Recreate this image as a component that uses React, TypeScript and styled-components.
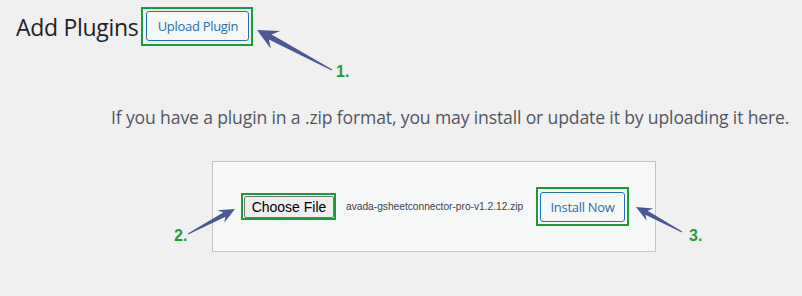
import React from "react";
import styled, { createGlobalStyle } from "styled-components";

const GlobalStyle = createGlobalStyle`
  html, body { margin: 0; padding: 0; background: #f0f0f1; }
  body { width: 802px; height: 296px; overflow: hidden; }
`;

const Page = styled.div`
  position: relative;
  width: 802px;
  height: 296px;
  box-sizing: border-box;
  padding-top: 7px;
  font-family: "Open Sans", "Noto Sans", sans-serif;
`;

const HeaderRow = styled.div`
  display: flex;
  align-items: center;
  padding-left: 16px;
  gap: 3px;
`;

const Title = styled.h1`
  margin: 0;
  font-size: 23px;
  font-weight: 400;
  line-height: 30px;
  color: #1d2327;
  letter-spacing: -0.3px;
`;

const Highlight = styled.div<{ $pad: string }>`
  display: inline-flex;
  border: 2px solid #1e9a3d;
  padding: ${(p) => p.$pad};
`;

const WpButton = styled.button<{ $w: number }>`
  box-sizing: border-box;
  width: ${(p) => p.$w}px;
  height: 30px;
  padding: 0;
  background: #f6f7f7;
  border: 1px solid #2271b1;
  border-radius: 3px;
  color: #2271b1;
  font-family: "Open Sans", "Noto Sans", sans-serif;
  font-size: 13px;
  letter-spacing: -0.3px;
  cursor: pointer;
`;

const Help = styled.p`
  margin: 59px 0 0;
  padding-left: 111px;
  font-size: 17.6px;
  line-height: 24px;
  color: #50575e;
  white-space: nowrap;
  letter-spacing: -0.15px;
`;

const UploadBox = styled.div`
  box-sizing: border-box;
  margin: 32px 0 0 212px;
  width: 444px;
  height: 91px;
  background: #f6f7f7;
  border: 1px solid #c3c4c7;
  display: flex;
  align-items: center;
  padding-left: 28px;
`;

const FileButton = styled.button`
  box-sizing: border-box;
  width: 90px;
  height: 22px;
  padding: 0;
  background: #efefef;
  border: 1px solid #767676;
  border-radius: 2px;
  color: #000;
  font-family: "Liberation Sans", Arial, sans-serif;
  font-size: 14px;
  line-height: 20px;
`;

const FileName = styled.span`
  margin-left: 10px;
  font-family: "Liberation Sans", Arial, sans-serif;
  font-size: 10.2px;
  color: #3c434a;
  white-space: nowrap;
`;

const InstallWrap = styled.div`
  margin-left: auto;
  margin-right: 26px;
  display: flex;
`;

const Overlay = styled.svg`
  position: absolute;
  left: 0;
  top: 0;
  pointer-events: none;
`;

const StepLabel = styled.span<{ $x: number; $y: number }>`
  position: absolute;
  left: ${(p) => p.$x}px;
  top: ${(p) => p.$y}px;
  font-family: "Liberation Sans", Arial, sans-serif;
  font-weight: 700;
  font-size: 16px;
  line-height: 16px;
  color: #1e9a3d;
`;

type Pt = [number, number];

function arrowPoints(
  tip: Pt,
  tail: Pt,
  headLen: number,
  headHalf: number,
  notch: number,
  neckHalf: number,
  tailHalf: number
): string {
  const dx = tip[0] - tail[0];
  const dy = tip[1] - tail[1];
  const len = Math.hypot(dx, dy);
  const ux = dx / len;
  const uy = dy / len;
  const nx = -uy;
  const ny = ux;
  const base: Pt = [tip[0] - ux * headLen, tip[1] - uy * headLen];
  const neck: Pt = [tip[0] - ux * (headLen - notch), tip[1] - uy * (headLen - notch)];
  const pts: Pt[] = [
    tip,
    [base[0] + nx * headHalf, base[1] + ny * headHalf],
    [neck[0] + nx * neckHalf, neck[1] + ny * neckHalf],
    [tail[0] + nx * tailHalf, tail[1] + ny * tailHalf],
    [tail[0] - nx * tailHalf, tail[1] - ny * tailHalf],
    [neck[0] - nx * neckHalf, neck[1] - ny * neckHalf],
    [base[0] - nx * headHalf, base[1] - ny * headHalf],
  ];
  return pts.map((p) => `${p[0].toFixed(1)},${p[1].toFixed(1)}`).join(" ");
}

const arrows = [
  arrowPoints([257, 30], [332, 70], 21, 10, 6, 2.8, 0.6),
  arrowPoints([235, 209], [188, 234], 16, 7, 4, 2.3, 0.5),
  arrowPoints([636, 207], [682, 232], 16, 7, 4, 2.3, 0.5),
];

export default function App() {
  return (
    <>
      <GlobalStyle />
      <Page>
        <HeaderRow>
          <Title>Add Plugins</Title>
          <Highlight $pad="2px 2px 3px 3px">
            <WpButton $w={103}>Upload Plugin</WpButton>
          </Highlight>
        </HeaderRow>
        <Help>
          If you have a plugin in a .zip format, you may install or update it by uploading it here.
        </Help>
        <UploadBox>
          <Highlight $pad="1px 0 0 1px">
            <FileButton>Choose File</FileButton>
          </Highlight>
          <FileName>avada-gsheetconnector-pro-v1.2.12.zip</FileName>
          <InstallWrap>
            <Highlight $pad="3px 2px 2px 2px">
              <WpButton $w={85}>Install Now</WpButton>
            </Highlight>
          </InstallWrap>
        </UploadBox>
        <Overlay width={802} height={296} viewBox="0 0 802 296">
          {arrows.map((p, i) => (
            <polygon key={i} points={p} fill="#4b5894" />
          ))}
        </Overlay>
        <StepLabel $x={336} $y={64}>1.</StepLabel>
        <StepLabel $x={174} $y={228}>2.</StepLabel>
        <StepLabel $x={689} $y={228}>3.</StepLabel>
      </Page>
    </>
  );
}
